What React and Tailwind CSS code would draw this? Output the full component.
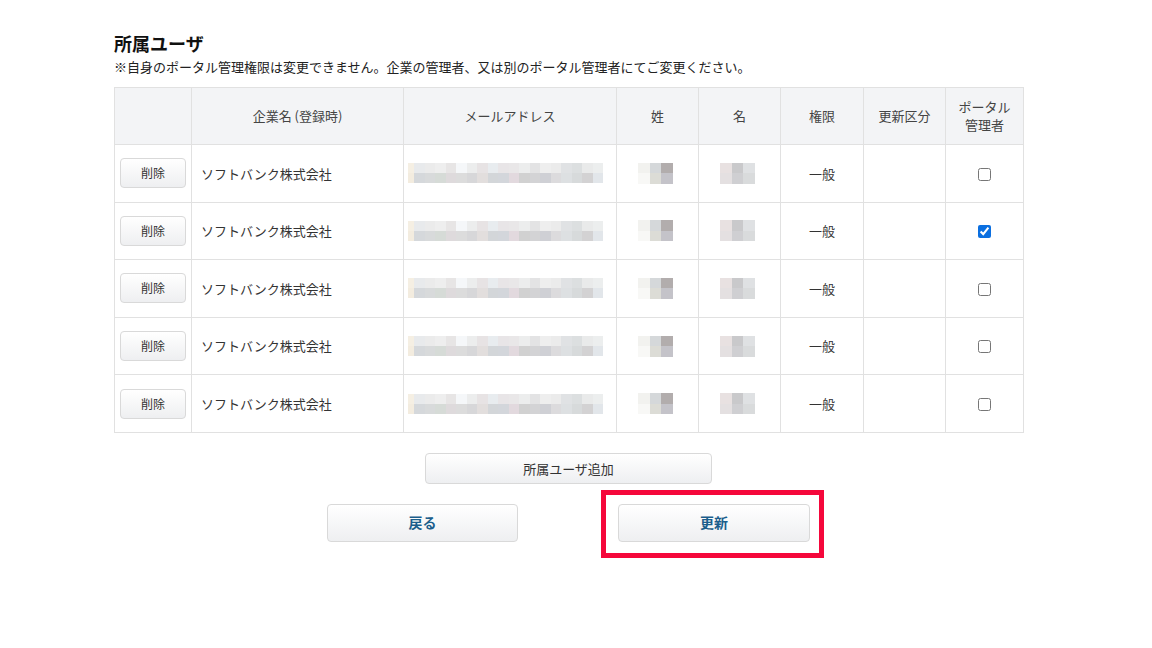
import React from 'react';

const rowA = ['#f5efe3', '#e8eaec', '#ebebeb', '#eeeeee', '#e7e5e5', '#f5f7f9', '#eceded', '#e7e3e4', '#e8ecef', '#e8e5e7', '#e9e7e8', '#eceded', '#e3e3e4', '#eeeeee', '#ebebeb', '#e0e2e4', '#dcdfe0', '#e9eaea', '#eceeee'];
const rowB = ['#f3ecdf', '#d5d8db', '#d8dadb', '#d6dbd7', '#dedadc', '#dcdcdc', '#d7d7d9', '#e2dedd', '#d3d6d9', '#d3d6db', '#e2d9de', '#d1d1d1', '#d3d3d5', '#cfd0d5', '#dcdbdd', '#dde0e2', '#d7dadb', '#d3d2d3', '#e2e6ea'];

const EmailBlur = () => (
  <div className="flex flex-col ml-[4px]">
    {[rowA, rowB].map((row, r) => (
      <div key={r} className="flex h-[10px]">
        {row.map((c, i) => (
          <div key={i} className={i === 0 ? 'w-[6px] h-full' : 'w-[10.5px] h-full'} style={{ background: c }} />
        ))}
      </div>
    ))}
  </div>
);

const NameBlur = ({ cells }) => (
  <div className="grid grid-cols-3 w-[35px] h-[21px] mx-auto -translate-x-[2px]">
    {cells.map((c, i) => (
      <div key={i} style={{ background: c }} />
    ))}
  </div>
);

const sei = ['#f2f2ef', '#d5d8da', '#b2adad', '#f8f8f6', '#dcdcd6', '#c4c3c9'];
const mei = ['#e8e1e1', '#c9c9cb', '#dfe1e3', '#e4e0e1', '#cfcfd2', '#d9dbdc'];

const users = [false, true, false, false, false];

const cell = 'border border-[#e1e1e1]';

export default function App() {
  return (
    <div className="min-h-[648px] bg-white text-[#333] pt-[31px] pl-[114px]" style={{ fontFamily: '"Noto Sans CJK JP", "Noto Sans", sans-serif' }}>
      <div className="w-[909px]">
        <h2 className="text-[18px] font-bold leading-[24px] text-[#111]">所属ユーザ</h2>
        <p className="text-[13px] leading-[18px] mt-[3px] mb-[11px] text-[#222]">※自身のポータル管理権限は変更できません。企業の管理者、又は別のポータル管理者にてご変更ください。</p>

        <table className="w-full border-collapse table-fixed text-[13px]">
          <colgroup>
            <col className="w-[77px]" />
            <col className="w-[212px]" />
            <col className="w-[213px]" />
            <col className="w-[82px]" />
            <col className="w-[82px]" />
            <col className="w-[83px]" />
            <col className="w-[82px]" />
            <col className="w-[78px]" />
          </colgroup>
          <thead>
            <tr className="h-[57px] bg-[#f3f4f6] text-[#444]">
              <th className={`${cell} font-normal`}></th>
              <th className={`${cell} font-normal`}>企業名 (登録時)</th>
              <th className={`${cell} font-normal`}>メールアドレス</th>
              <th className={`${cell} font-normal`}>姓</th>
              <th className={`${cell} font-normal`}>名</th>
              <th className={`${cell} font-normal`}>権限</th>
              <th className={`${cell} font-normal`}>更新区分</th>
              <th className={`${cell} font-normal leading-[18px]`}>ポータル<br />管理者</th>
            </tr>
          </thead>
          <tbody>
            {users.map((checked, i) => (
              <tr key={i} className="h-[57.6px]">
                <td className={`${cell} px-[5px]`}>
                  <button className="w-[66px] h-[30px] rounded-[4px] border border-[#d9d9d9] bg-gradient-to-b from-white to-[#eeeff1] text-[12px] text-[#333]">削除</button>
                </td>
                <td className={`${cell} pl-[9px]`}>ソフトバンク株式会社</td>
                <td className={cell}><EmailBlur /></td>
                <td className={cell}><NameBlur cells={sei} /></td>
                <td className={cell}><NameBlur cells={mei} /></td>
                <td className={`${cell} text-center`}>一般</td>
                <td className={cell}></td>
                <td className={`${cell} text-center`}>
                  <input type="checkbox" defaultChecked={checked} className="w-[13px] h-[13px] align-middle accent-[#0b6fe0] -translate-y-[1px]" />
                </td>
              </tr>
            ))}
          </tbody>
        </table>

        <div className="flex justify-center mt-[20px]">
          <button className="w-[287px] h-[31px] rounded-[4px] border border-[#d9d9d9] bg-gradient-to-b from-white to-[#eeeff1] text-[13px] text-[#333]">所属ユーザ追加</button>
        </div>

        <div className="flex justify-center gap-[100px] mt-[20px]">
          <button className="w-[191px] h-[38px] rounded-[4px] border border-[#d9d9d9] bg-gradient-to-b from-white to-[#eeeff1] text-[14px] font-bold text-[#1b5e8c]">戻る</button>
          <div className="relative">
            <button className="w-[192px] h-[38px] rounded-[4px] border border-[#d9d9d9] bg-gradient-to-b from-white to-[#eeeff1] text-[14px] font-bold text-[#1b5e8c]">更新</button>
            <div className="absolute left-[-17px] right-[-14px] top-[-14px] bottom-[-16px] border-[5px] border-[#f5073b] pointer-events-none" />
          </div>
        </div>
      </div>
    </div>
  );
}
